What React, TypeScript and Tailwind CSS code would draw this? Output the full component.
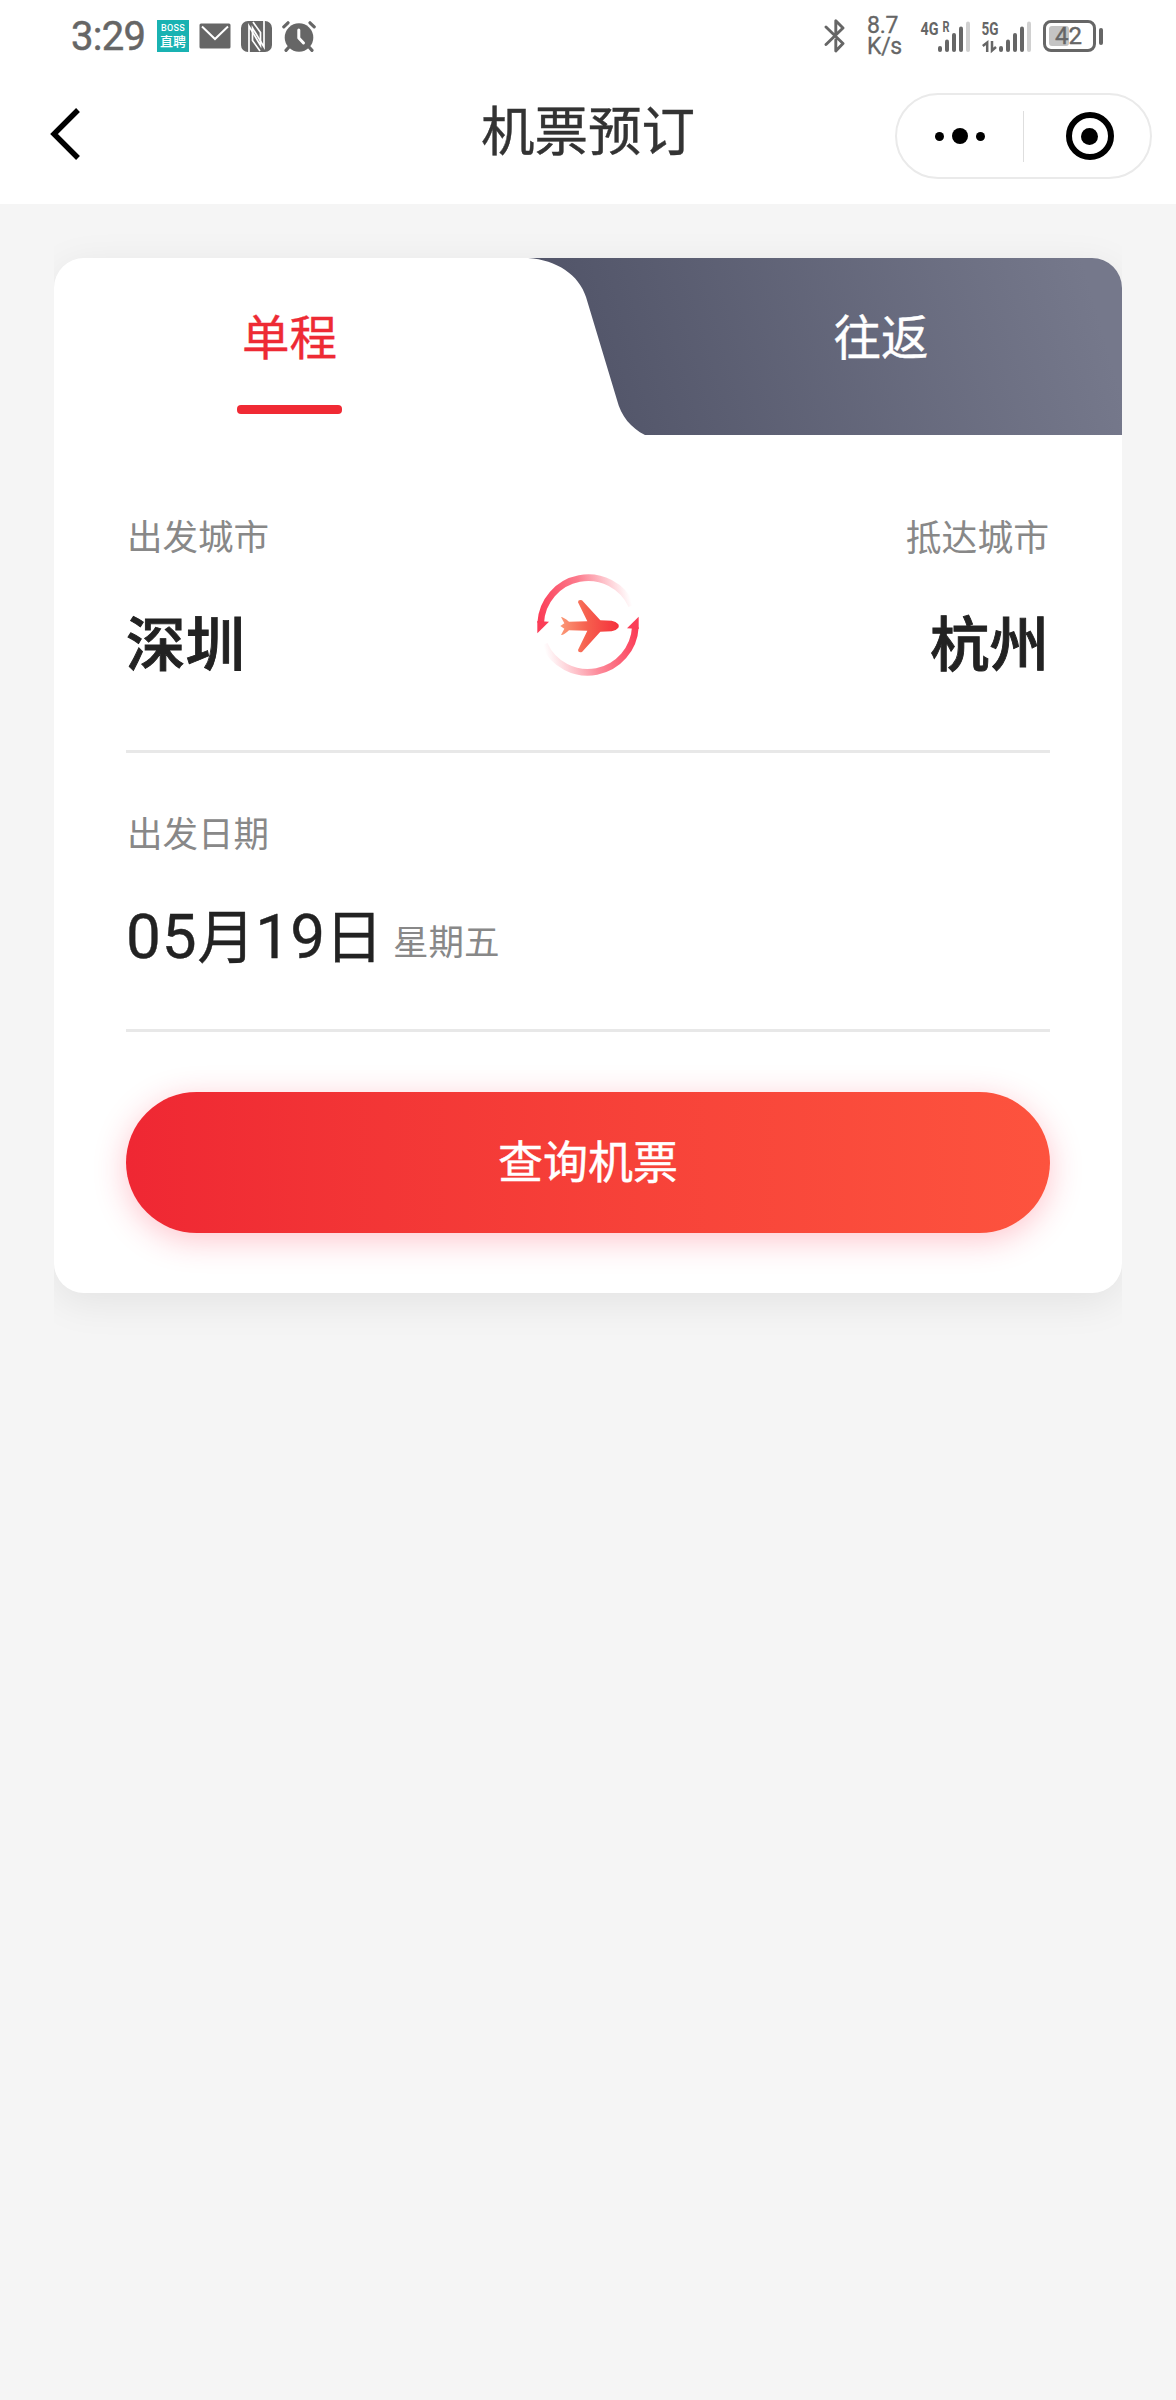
import React from "react";

function StatusLeft() {
  return (
    <div className="flex h-[32px] items-center">
      <span className="w-[86px] pt-[2px] text-[40px] leading-[32px] tracking-[-0.7px] font-['Roboto',sans-serif] [-webkit-text-stroke:0.5px_#666]">3:29</span>
      <div className="flex h-[32px] w-[32px] flex-col items-center bg-[#19b2b2] pt-[4px] text-white">
        <span className="text-[9px] font-medium leading-[9px] tracking-[0.3px] font-['Roboto',sans-serif]">BOSS</span>
        <span className="text-[13px] font-medium leading-[15px]">直聘</span>
      </div>
      <svg className="ml-[10px]" width="32" height="26" viewBox="0 0 32 26">
        <rect x="0.5" y="0.5" width="31" height="25" rx="1.5" fill="#666" />
        <path d="M3 3.5 L16 16 L29 3.5" fill="none" stroke="#fff" strokeWidth="2" />
      </svg>
      <svg className="ml-[10px]" width="31" height="31" viewBox="0 0 31 31">
        <rect width="31" height="31" rx="7" fill="#666" />
        <path d="M8 31 V5 L19.5 24.5 V11.5 L12 1" fill="none" stroke="#fff" strokeWidth="1.7" />
        <path d="M23 0 V26 L11.5 7 V19.5 L19 30" fill="none" stroke="#fff" strokeWidth="1.7" />
      </svg>
      <svg className="ml-[10px]" width="34" height="31" viewBox="0 0 34 31">
        <circle cx="17" cy="16.5" r="14.3" fill="#666" />
        <path d="M1.8 5.8 L6 1.8 M32.2 5.8 L28 1.8 M7 26 L4 29.3 M27 26 L30 29.3" stroke="#666" strokeWidth="3.2" strokeLinecap="round" />
        <path d="M16.8 9 V17 L21.5 22" fill="none" stroke="#fff" strokeWidth="3" strokeLinecap="round" strokeLinejoin="round" />
      </svg>
    </div>
  );
}

function Bars({ x }: { x: number }) {
  return (
    <g>
      <rect x={x} y="25" width="4" height="6" rx="2" fill="#666" />
      <rect x={x + 7} y="18.5" width="4" height="12.5" rx="2" fill="#666" />
      <rect x={x + 14} y="12" width="4" height="19" rx="2" fill="#666" />
      <rect x={x + 21} y="5.5" width="4" height="25.5" rx="2" fill="#666" />
      <rect x={x + 28} y="0.5" width="4" height="30.5" rx="2" fill="#d0d0d0" />
    </g>
  );
}

function StatusRight() {
  return (
    <div className="flex h-[40px] items-center">
      <svg width="22" height="34" viewBox="0 0 22 34" fill="none" stroke="#666" strokeWidth="2.9" strokeLinecap="round" strokeLinejoin="round">
        <path d="M2 8 L19 24.5 L11.8 32 V21 M2 25.5 L19 9 L11.8 1.8 V14" />
      </svg>
      <div className="ml-[21px] flex w-[54px] flex-col text-[23px] leading-[21px] tracking-[-0.3px] font-['Roboto',sans-serif] [-webkit-text-stroke:0.3px_#666]">
        <span>8.7</span>
        <span>K/s</span>
      </div>
      <svg className="overflow-visible" width="50" height="31" viewBox="0 0 50 31">
        <text x="-0.5" y="13.5" fontSize="18.5" fontWeight="700" fill="#666" fontFamily="Roboto, sans-serif" textLength="18" lengthAdjust="spacingAndGlyphs">4G</text>
        <text x="21.5" y="11" fontSize="15" fontWeight="700" fill="#666" fontFamily="Roboto, sans-serif" textLength="7" lengthAdjust="spacingAndGlyphs">R</text>
        <Bars x={17} />
      </svg>
      <svg className="ml-[11px] overflow-visible" width="50" height="31" viewBox="0 0 50 31">
        <text x="-0.5" y="13.5" fontSize="18.5" fontWeight="700" fill="#666" fontFamily="Roboto, sans-serif" textLength="17" lengthAdjust="spacingAndGlyphs">5G</text>
        <path d="M5.2 31 V21.5 L0.8 25 M10 20 V29.5 L14 26" fill="none" stroke="#666" strokeWidth="2.5" />
        <Bars x={17} />
      </svg>
      <div className="ml-[11px] flex items-center">
        <div className="h-[32px] w-[53px] rounded-[8px] border-[3px] border-[#666] p-[3px]">
          <div className="relative h-full w-[20px] rounded-[3px] bg-[#c4c4c4]">
            <span className="absolute left-[6px] top-0 text-[24px] leading-[21px] font-['Roboto',sans-serif] [-webkit-text-stroke:0.4px_#666]">42</span>
          </div>
        </div>
        <div className="ml-[3px] h-[17px] w-[4px] rounded-[2px] bg-[#666]" />
      </div>
    </div>
  );
}

function SwapPlane() {
  return (
    <svg width="102" height="102" viewBox="51 45 306 306">
      <defs>
        <linearGradient id="arcA" gradientUnits="userSpaceOnUse" x1="65" y1="200" x2="335" y2="130">
          <stop offset="0" stopColor="#fb3d57" />
          <stop offset="0.5" stopColor="#fb3d57" stopOpacity="0.68" />
          <stop offset="1" stopColor="#fb3d57" stopOpacity="0" />
        </linearGradient>
        <linearGradient id="arcB" gradientUnits="userSpaceOnUse" x1="343" y1="195" x2="72" y2="265">
          <stop offset="0" stopColor="#fb3d57" />
          <stop offset="0.5" stopColor="#fb3d57" stopOpacity="0.6" />
          <stop offset="1" stopColor="#fb3d57" stopOpacity="0" />
        </linearGradient>
        <linearGradient id="plane" x1="0" y1="0" x2="1" y2="0">
          <stop offset="0" stopColor="#fb9a78" />
          <stop offset="0.45" stopColor="#f6604e" />
          <stop offset="1" stopColor="#f5303c" />
        </linearGradient>
      </defs>
      <path d="M62 192 A143 143 0 0 1 335 140" fill="none" stroke="url(#arcA)" strokeWidth="20" />
      <path d="M52 186 L87 188 L52 223 Z" fill="#fb3d57" />
      <path d="M346 204 A143 143 0 0 1 73 256" fill="none" stroke="url(#arcB)" strokeWidth="20" />
      <path d="M356 210 L321 208 L356 173 Z" fill="#fb3d57" />
      <path d="M121 201 L133 193 L123 174 Q130 174 147 188 L202 187 L174 130 Q174 121 186 124 L241 184 L275 185 Q288 187 295 196 Q298 201 295 206 Q288 215 275 217 L241 218 L186 279 Q174 282 174 273 L202 215 L147 214 Q130 230 123 228 L133 209 Z" fill="url(#plane)" />
    </svg>
  );
}

export default function App() {
  return (
    <div className="min-h-[2400px] w-[1176px] bg-[#f5f5f5] font-['Noto_Sans_CJK_SC',sans-serif]">
      <header className="h-[204px] bg-white">
        <div className="flex h-[72px] items-center justify-between pl-[71px] pr-[73px] text-[#666]">
          <StatusLeft />
          <StatusRight />
        </div>
        <div className="grid h-[128px] grid-cols-[1fr_auto_1fr] items-center">
          <svg className="ml-[49px] mt-[-4px]" width="32" height="52" viewBox="0 0 32 52">
            <path d="M29 2 L5 26 L29 50" fill="none" stroke="#000" strokeWidth="5.4" />
          </svg>
          <h1 className="mt-[-17px] text-[53.5px] leading-[64px] text-[#333] [-webkit-text-stroke:0.4px_#333]">机票预订</h1>
          <div className="mr-[24px] flex h-[86px] w-[257px] items-center justify-self-end rounded-full border-2 border-[#eaeaea]">
            <div className="flex w-[126px] items-center justify-center gap-[8px]">
              <i className="h-[9px] w-[9px] rounded-full bg-black" />
              <i className="h-[16px] w-[16px] rounded-full bg-black" />
              <i className="h-[9px] w-[9px] rounded-full bg-black" />
            </div>
            <div className="h-[51px] w-px bg-[#dedede]" />
            <div className="flex flex-1 items-center justify-center pl-[5px]">
              <div className="flex h-[48px] w-[48px] items-center justify-center rounded-full border-[6px] border-black">
                <i className="h-[17px] w-[17px] rounded-full bg-black" />
              </div>
            </div>
          </div>
        </div>
      </header>

      <main className="mx-[54px] overflow-hidden pb-[60px] pt-[54px]">
        <section className="h-[1035px] rounded-[30px] bg-white shadow-[0_9px_40px_rgba(0,0,0,0.08)]">
          <div className="relative flex h-[177px]">
            <svg className="absolute right-0 top-0" width="597" height="177" viewBox="0 0 597 177">
              <defs>
                <linearGradient id="tab" gradientUnits="userSpaceOnUse" x1="80" y1="150" x2="560" y2="10">
                  <stop offset="0" stopColor="#53566a" />
                  <stop offset="1" stopColor="#75788b" />
                </linearGradient>
              </defs>
              <path d="M3 0 C32 2 54 17 61 39 L92 142 C96 158 106 170 120 177 H597 V30 A30 30 0 0 0 567 0 Z" fill="url(#tab)" />
            </svg>
            <div className="relative flex w-[471px] flex-col items-center pt-[45px] text-[47.5px] leading-[64px] text-[#ee2a34]">
              <span className="[-webkit-text-stroke:0.4px_#ee2a34]">单程</span>
              <div className="mt-[38px] h-[9px] w-[105px] rounded-[4px] bg-[#f02a34]" />
            </div>
            <div className="relative ml-[115px] flex w-[482px] justify-center pt-[45px] text-[47.5px] leading-[64px] text-white">
              <span className="[-webkit-text-stroke:0.4px_#fff]">往返</span>
            </div>
          </div>

          <div className="mx-[72px]">
            <div className="flex h-[318px] justify-between border-b-[3px] border-[#e8e8e8] pt-[74px]">
              <div className="w-[300px]">
                <p className="pl-px text-[35.5px] leading-[52px] text-[#888]">出发城市</p>
                <p className="mt-[35px] text-[59.5px] font-medium leading-[88px] text-[#222] [-webkit-text-stroke:0.9px_#222]">深圳</p>
              </div>
              <div className="pt-[65px]">
                <SwapPlane />
              </div>
              <div className="w-[300px] text-right">
                <p className="pr-px text-[35.8px] leading-[52px] text-[#888]">抵达城市</p>
                <p className="mt-[35px] pr-px text-[59.5px] font-medium leading-[88px] text-[#222] [-webkit-text-stroke:0.9px_#222]">杭州</p>
              </div>
            </div>

            <div className="h-[279px] border-b-[3px] border-[#e8e8e8] pt-[53px]">
              <p className="pl-px text-[35.5px] leading-[52px] text-[#888]">出发日期</p>
              <div className="mt-[35px] flex items-baseline">
                <span className="text-[62px] leading-[88px] text-[#222] font-['Roboto','Noto_Sans_CJK_SC',sans-serif] [-webkit-text-stroke:0.4px_#222]">
                  <span className="tracking-[0.8px]">05</span>
                  <span className="text-[58px]">月</span>
                  <span>19</span>
                  <span className="text-[58px]">日</span>
                </span>
                <span className="relative bottom-[3px] ml-[10px] text-[35.5px] text-[#888]">星期五</span>
              </div>
            </div>

            <button className="mt-[60px] flex h-[141px] w-full items-center justify-center rounded-full bg-gradient-to-r from-[#ef2733] to-[#fd533e] pb-[6px] text-[45px] text-white shadow-[0_7px_32px_rgba(255,40,70,0.27)] [-webkit-text-stroke:0.4px_#fff]">
              查询机票
            </button>
          </div>
        </section>
      </main>
    </div>
  );
}
